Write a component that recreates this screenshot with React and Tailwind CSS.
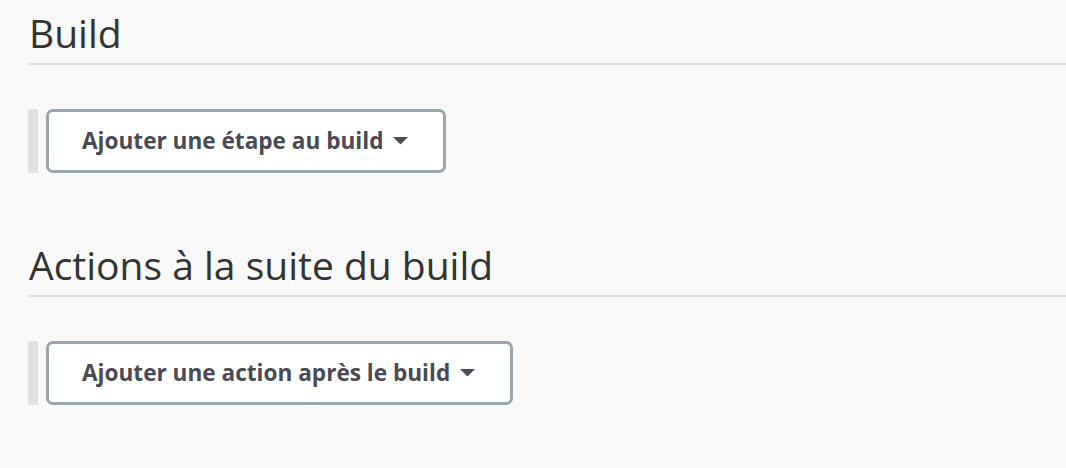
const sections = [
  { title: "Build", button: "Ajouter une étape au build" },
  { title: "Actions à la suite du build", button: "Ajouter une action après le build" },
];

function Caret() {
  return (
    <svg width="15" height="8" viewBox="0 0 15 8" className="ml-[10px] shrink-0">
      <path d="M0 0 H15 L7.5 7.5 Z" fill="#4d4d57" />
    </svg>
  );
}

function Section({ title, button }) {
  return (
    <section>
      <h2 className="text-[39px] leading-[48px] text-[#333] border-b-2 border-[#e0e0e0] pb-[6px] pl-[1px]">
        {title}
      </h2>
      <div className="flex mt-[44px] border-l-[10px] border-[#e1e1e1]">
        <button className="ml-[8px] h-[64px] flex items-center pl-[33px] pr-[35px] bg-white border-[3px] border-[#9aa6ae] rounded-[7px] text-[22.6px] font-bold text-[#4a4a55]">
          {button}
          <Caret />
        </button>
      </div>
    </section>
  );
}

export default function App() {
  return (
    <div
      className="w-[1066px] h-[468px] bg-[#f8f8f8] pl-[28px] pt-[9px] flex flex-col gap-[68px] overflow-hidden"
      style={{ fontFamily: '"Open Sans", "Noto Sans", sans-serif' }}
    >
      {sections.map((s) => (
        <Section key={s.title} {...s} />
      ))}
    </div>
  );
}
